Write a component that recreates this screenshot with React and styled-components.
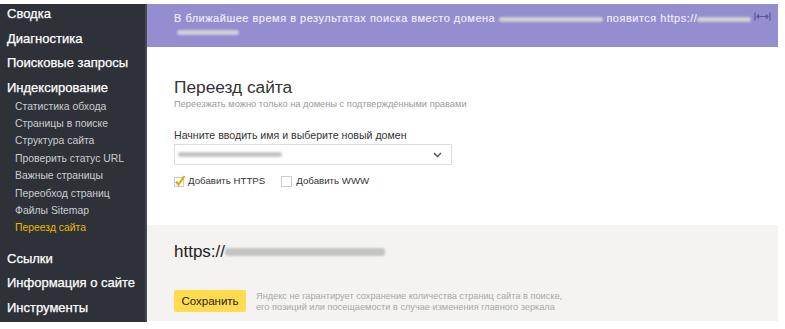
import styled, { createGlobalStyle } from "styled-components";

const GlobalStyle = createGlobalStyle`
	body {
		margin: 0;
		background: #fff;
		font-family: "Liberation Sans", Arial, sans-serif;
	}
`;

const Page = styled.div`
	display: flex;
	width: 785px;
	height: 329px;
	box-sizing: border-box;
	padding: 4px 7px 7px 0;
`;

const Sidebar = styled.nav`
	width: 145px;
	flex-shrink: 0;
	background: #2e3238;
	border-right: 2px solid #464a50;
	display: flex;
	flex-direction: column;
`;

const NavItem = styled.div`
	color: #fff;
	font-size: 13px;
	line-height: 20px;
	padding-left: 7px;
	margin-bottom: ${(p) => (p.$tight ? "0" : "4.5px")};
	margin-top: ${(p) => (p.$gap ? "12px" : "0")};
	-webkit-text-stroke: 0.25px #fff;
	white-space: nowrap;
`;

const SubList = styled.div`
	display: flex;
	flex-direction: column;
`;

const SubItem = styled.div`
	color: ${(p) => (p.$active ? "#e8b800" : "#c9ccd0")};
	font-size: 10.4px;
	line-height: 17.4px;
	padding-left: 15px;
	white-space: nowrap;
`;

const Main = styled.main`
	flex: 1;
	display: flex;
	flex-direction: column;
`;

const Banner = styled.div`
	height: 43px;
	background: #948dcf;
	display: flex;
	justify-content: space-between;
	padding: 8px 7px 0 27px;
	box-sizing: border-box;
`;

const BannerText = styled.div`
	color: #f0eefa;
	font-size: 11px;
	line-height: 13px;
	letter-spacing: 0.5px;
	-webkit-text-stroke: 0.15px #f0eefa;
	white-space: nowrap;
`;

const Blur = styled.span`
	display: inline-block;
	vertical-align: middle;
	width: ${(p) => p.$w}px;
	height: ${(p) => p.$h || 5}px;
	border-radius: 3px;
	background: ${(p) => p.$color || "#cfcfd4"};
	filter: blur(0.8px);
	margin: 0 ${(p) => p.$mx || 0}px;
`;

const Section = styled.section`
	padding: 29px 0 37px 27px;
	display: flex;
	flex-direction: column;
	align-items: flex-start;
`;

const Title = styled.h1`
	margin: 0;
	font-size: 17.3px;
	font-weight: 400;
	line-height: 22px;
	color: #333;
`;

const Subtitle = styled.div`
	font-size: 9.3px;
	line-height: 12px;
	color: #9a9a9a;
`;

const Label = styled.div`
	margin-top: 18px;
	font-size: 10.6px;
	line-height: 14px;
	color: #333;
`;

const Select = styled.div`
	margin-top: 2px;
	width: 278px;
	height: 21px;
	box-sizing: border-box;
	border: 1px solid #dcdcdc;
	display: flex;
	align-items: center;
	justify-content: space-between;
	padding: 0 9px 0 3px;
`;

const Checks = styled.div`
	margin-top: 9px;
	display: flex;
	gap: 16px;
`;

const Check = styled.label`
	display: flex;
	align-items: center;
	gap: 2px;
	font-size: 9.7px;
	line-height: 14px;
	color: #333;
`;

const Box = styled.span`
	width: 9px;
	height: 9px;
	border: 1px solid #ccc;
	margin-right: 2px;
`;

const Footer = styled.section`
	background: #f4f3f1;
	height: 96px;
	box-sizing: border-box;
	padding: 16px 0 0 27px;
	display: flex;
	flex-direction: column;
`;

const Url = styled.div`
	font-size: 17px;
	line-height: 22px;
	color: #222;
	display: flex;
	align-items: center;
`;

const Actions = styled.div`
	margin-top: 27px;
	display: flex;
	align-items: center;
	gap: 10px;
`;

const Button = styled.button`
	width: 72px;
	height: 22px;
	border: none;
	border-radius: 2px;
	background: #ffdb4d;
	font-family: inherit;
	font-size: 11.5px;
	color: #222;
	padding: 0;
`;

const Note = styled.div`
	margin-top: 1px;
	font-size: 9.2px;
	line-height: 10.5px;
	color: #a8a8a8;
`;

const subItems = [
	"Статистика обхода",
	"Страницы в поиске",
	"Структура сайта",
	"Проверить статус URL",
	"Важные страницы",
	"Переобход страниц",
	"Файлы Sitemap",
];

const App = () => {
	return (
		<>
			<GlobalStyle />
			<Page>
				<Sidebar>
					<NavItem>Сводка</NavItem>
					<NavItem>Диагностика</NavItem>
					<NavItem>Поисковые запросы</NavItem>
					<NavItem $tight>Индексирование</NavItem>
					<SubList>
						{subItems.map((s) => (
							<SubItem key={s}>{s}</SubItem>
						))}
						<SubItem $active>Переезд сайта</SubItem>
					</SubList>
					<NavItem $gap>Ссылки</NavItem>
					<NavItem>Информация о сайте</NavItem>
					<NavItem>Инструменты</NavItem>
				</Sidebar>
				<Main>
					<Banner>
						<BannerText>
							В ближайшее время в результатах поиска вместо домена{" "}
							<Blur $w={104} />
							{" "}появится https://
							<Blur $w={54} />
							<br />
							<Blur $w={62} $mx={3} />
						</BannerText>
						<svg width="17" height="9" viewBox="0 0 17 9" fill="none" stroke="#5c5a96" strokeWidth="1.2">
							<path d="M1 0.5v8M16 0.5v8M3 4.5h11M5 2.5l-2 2 2 2M12 2.5l2 2-2 2" />
						</svg>
					</Banner>
					<Section>
						<Title>Переезд сайта</Title>
						<Subtitle>Переезжать можно только на домены с подтверждёнными правами</Subtitle>
						<Label>Начните вводить имя и выберите новый домен</Label>
						<Select>
							<Blur $w={104} $h={5} $color="#c6c6c6" />
							<svg width="9" height="6" viewBox="0 0 9 6" fill="none" stroke="#555" strokeWidth="1.4">
								<path d="M1 1l3.5 3.5L8 1" />
							</svg>
						</Select>
						<Checks>
							<Check>
								<svg width="12" height="12" viewBox="0 0 12 12" fill="none">
									<rect x="0.5" y="2.5" width="9" height="9" stroke="#ccc" />
									<path d="M2 6.5l2.5 3L10.5 1" stroke="#e0a500" strokeWidth="2" />
								</svg>
								Добавить HTTPS
							</Check>
							<Check>
								<Box />
								Добавить WWW
							</Check>
						</Checks>
					</Section>
					<Footer>
						<Url>
							https://
							<Blur $w={160} $h={8} $color="#c4c4c4" />
						</Url>
						<Actions>
							<Button>Сохранить</Button>
							<Note>
								Яндекс не гарантирует сохранение количества страниц сайта в поиске,
								<br />
								его позиций или посещаемости в случае изменения главного зеркала
							</Note>
						</Actions>
					</Footer>
				</Main>
			</Page>
		</>
	);
};

export default App;
